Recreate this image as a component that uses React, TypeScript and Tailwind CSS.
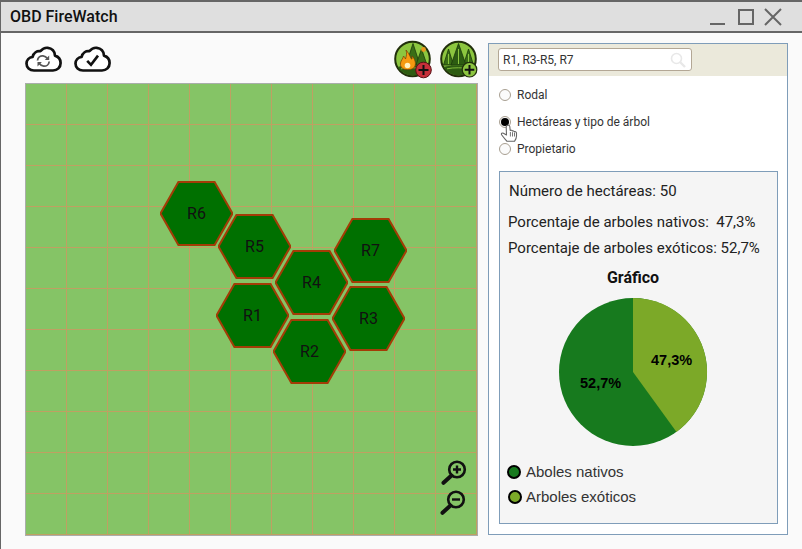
import React from 'react';

const hexes = [
  { label: 'R6', pos: 'left-[134px] top-[97px]' },
  { label: 'R5', pos: 'left-[192px] top-[130px]' },
  { label: 'R7', pos: 'left-[308px] top-[134px]' },
  { label: 'R4', pos: 'left-[249px] top-[166px]' },
  { label: 'R1', pos: 'left-[190px] top-[199px]' },
  { label: 'R3', pos: 'left-[306px] top-[202px]' },
  { label: 'R2', pos: 'left-[247px] top-[235px]' },
];

const cells = Array.from({ length: 121 });

const Hex: React.FC<{ label: string; pos: string }> = ({ label, pos }) => (
  <div className={`absolute ${pos} w-[73px] h-[65px] flex items-center justify-center`}>
    <svg className="absolute inset-0" width="73" height="65" viewBox="0 0 73 65">
      <polygon points="0.5,32.5 18.4,1 54.6,1 72.5,32.5 54.6,64 18.4,64" fill="#007000" stroke="#a33c06" strokeWidth="2" />
    </svg>
    <span className="relative text-[16px] text-[#111] font-['Roboto',sans-serif]">{label}</span>
  </div>
);

const CloudOutline = () => (
  <path
    d="M9 24.5C4.6 24.5 1.5 21.5 1.5 17.6C1.5 14 4 11.3 7.6 10.8C8.6 6.8 12 4.6 15.4 5.2C17.4 2.8 20 1.5 22.8 1.8C27 2.2 29.8 5.4 30 9.6C33.4 10.6 35.6 13.4 35.6 17C35.6 21.4 32.4 24.5 28 24.5Z"
    fill="#fff"
    stroke="#111"
    strokeWidth="2.7"
    strokeLinejoin="round"
  />
);

const CloudSync = () => (
  <svg width="37" height="26" viewBox="0 0 37 26">
    <CloudOutline />
    <g fill="none" stroke="#555" strokeWidth="1.8">
      <path d="M12.5 14.5C12.8 11.4 15.4 9.6 18 9.8C20 10 21.4 11 22.4 12.4" />
      <path d="M24.2 15.5C23.9 18.6 21.3 20.4 18.7 20.2C16.7 20 15.3 19 14.3 17.6" />
    </g>
    <path d="M24.2 9.6V14H19.8Z" fill="#555" />
    <path d="M12.5 20.4V16H16.9Z" fill="#555" />
  </svg>
);

const CloudCheck = () => (
  <svg width="37" height="26" viewBox="0 0 37 26">
    <CloudOutline />
    <path d="M13.2 14.8L17 18.8L24 9.6" fill="none" stroke="#111" strokeWidth="2.6" />
  </svg>
);

const Ground = () => (
  <g>
    <path d="M3.5 27C11 24.5 26 24.5 33.5 27C30 32.5 24 35.5 18.5 35.5C13 35.5 7 32.5 3.5 27Z" fill="#2d5c12" />
    <path d="M7 28.8C13 27.4 24 27.4 30 28.8" fill="none" stroke="#8cc63f" strokeWidth="0.9" />
  </g>
);

const FireBadge = () => (
  <svg width="46" height="42" viewBox="0 0 46 42">
    <circle cx="18.5" cy="19" r="17.3" fill="#8cc63f" stroke="#22300c" strokeWidth="2" />
    <path d="M19 3.5L26 25H12Z" fill="#3a6e16" stroke="#1c3a0c" strokeWidth="0.8" />
    <path d="M27.5 9L33 25H22Z" fill="#3a6e16" stroke="#1c3a0c" strokeWidth="0.8" />
    <Ground />
    <g transform="translate(1 2)">
      <path d="M11 8C16 14 15 16 16.5 17C17.5 17.5 17 15 17 14C20 17 21 21 20 24C19 27 15 28 11 27.5C7 27 5 24.5 5.5 21C6 18 8 17 8.5 14C9.5 15 10 16 10.5 17C11.5 14 12 11 11 8Z" fill="#f59a10" stroke="#7a3b05" strokeWidth="0.7" />
      <circle cx="12.5" cy="23.5" r="2.8" fill="#fff2c0" />
    </g>
    <circle cx="29.5" cy="9.5" r="2.4" fill="#e79a1c" />
    <circle cx="29.5" cy="30" r="7.8" fill="#c6303a" stroke="#5a1015" strokeWidth="1" />
    <path d="M29.5 25V35M24.5 30H34.5" stroke="#111" strokeWidth="2" />
  </svg>
);

const TreeBadge = () => (
  <svg width="46" height="42" viewBox="0 0 46 42">
    <circle cx="18.5" cy="19" r="17.3" fill="#8cc63f" stroke="#22300c" strokeWidth="2" />
    <path d="M8.5 9L13.5 25H3.5Z" fill="#3a6e16" stroke="#1c3a0c" strokeWidth="0.8" />
    <path d="M28.5 9L33.5 25H23.5Z" fill="#3a6e16" stroke="#1c3a0c" strokeWidth="0.8" />
    <path d="M18.5 3.5L26 25H11Z" fill="#2d5c12" stroke="#1c3a0c" strokeWidth="0.8" />
    <path d="M18.5 9V24M8.5 14V24M28.5 14V24" stroke="#8cc63f" strokeWidth="1" />
    <Ground />
    <circle cx="29.5" cy="29.7" r="7.3" fill="#8cc63f" stroke="#22300c" strokeWidth="1.2" />
    <path d="M29.5 25V34.5M24.7 29.7H34.3" stroke="#111" strokeWidth="2" />
  </svg>
);

const ZoomIcon: React.FC<{ plus?: boolean }> = ({ plus }) => (
  <svg width="26" height="26" viewBox="0 0 26 26">
    <circle cx="16" cy="9.5" r="7.8" fill="#85c466" stroke="#111" strokeWidth="2.6" />
    <path d="M10.5 15.5L2.5 22.8" stroke="#111" strokeWidth="4" strokeLinecap="round" />
    <path d={plus ? 'M12 9.5H20M16 5.5V13.5' : 'M12 9.5H20'} stroke="#111" strokeWidth="2.4" />
  </svg>
);

const HandCursor = () => (
  <svg width="18" height="18" viewBox="0 0 18 18">
    <path
      d="M7 1.5C8 0.8 9.5 1 9.8 2.5L10.2 6.5C11 6 12 6.2 12.4 7C13 6.6 14 6.9 14.3 7.7C15 7.4 16.4 7.8 16.5 9V12C16.5 14 15.5 16 14.5 17.3H7C5.5 15.5 3.5 13.5 1.6 10.8C1 9.5 2.2 8.5 3.4 9.2L6.5 11L6.2 3C6.2 2.4 6.5 1.9 7 1.5Z"
      fill="#fff"
      stroke="#666"
      strokeWidth="1.1"
      strokeLinejoin="round"
    />
    <path d="M10.4 8V12.5M12.5 8.2V12.5M14.5 8.6V12.5" stroke="#666" strokeWidth="0.9" />
  </svg>
);

const Radio: React.FC<{ checked?: boolean; label: string }> = ({ checked, label }) => (
  <div className="flex items-center h-[27px]">
    <span className="w-[12px] h-[12px] rounded-full border border-[#a89f91] bg-[#fbfbfb] flex items-center justify-center shrink-0">
      {checked && <span className="w-[8px] h-[8px] rounded-full bg-black" />}
    </span>
    <span className="ml-[6px] text-[12px] text-[#333]">{label}</span>
  </div>
);

const App: React.FC = () => {
  return (
    <div className="w-[802px] h-[549px] overflow-hidden bg-[#fafafa] border-l border-t-2 border-[#666] font-['Roboto',sans-serif] flex flex-col">
      {/* barra de titulo */}
      <div className="h-[31px] shrink-0 bg-[#dfdfdf] border-b-2 border-[#666] flex items-center justify-between pl-[9px]">
        <span className="text-[16px] font-medium text-[#111]">OBD FireWatch</span>
        <svg width="82" height="22" viewBox="0 0 82 22" className="mr-[10px] mt-[2px]">
          <path d="M0 17H15" stroke="#666" strokeWidth="2" />
          <rect x="29" y="3" width="14" height="14" fill="none" stroke="#666" strokeWidth="2" />
          <path d="M55 2L71 18M71 2L55 18" stroke="#666" strokeWidth="2" />
        </svg>
      </div>

      <div className="flex-1 flex pl-[24px] pt-[10px] gap-[10px]">
        {/* mapa */}
        <div className="w-[453px] flex flex-col">
          <div className="h-[40px] flex items-start justify-between">
            <div className="flex gap-[12px] pt-[3px]">
              <CloudSync />
              <CloudCheck />
            </div>
            <div className="flex -mr-[8px] -mt-[3px]">
              <FireBadge />
              <TreeBadge />
            </div>
          </div>
          <div className="relative w-[453px] h-[453px] border border-[#a9aeaa] overflow-hidden bg-[#85c466]">
            <div className="grid grid-cols-[repeat(11,41px)] auto-rows-[41px]">
              {cells.map((_, i) => (
                <div key={i} className="w-[41px] h-[41px] border-r border-b border-[#bfa062]" />
              ))}
            </div>
            {hexes.map(h => (
              <Hex key={h.label} label={h.label} pos={h.pos} />
            ))}
            <div className="absolute left-[415px] top-[376px] flex flex-col gap-[4px]">
              <ZoomIcon plus />
              <div className="-ml-[1px]">
                <ZoomIcon />
              </div>
            </div>
          </div>
        </div>

        {/* panel derecho */}
        <div className="w-[300px] h-[492px] bg-white border border-[#7f9db9] flex flex-col">
          <div className="h-[32px] shrink-0 bg-[#ebe9db] pl-[9px] pt-[4px]">
            <div className="w-[194px] h-[23px] bg-white border border-[#b3a795] rounded-[3px] flex items-center justify-between pl-[4px] pr-[5px]">
              <span className="text-[12px] text-[#333]">R1, R3-R5, R7</span>
              <svg width="16" height="16" viewBox="0 0 16 16" fill="none" stroke="#e8e8e8" strokeWidth="1.6">
                <circle cx="6.5" cy="6.5" r="5" />
                <path d="M10 10L15 15" strokeWidth="2.4" />
              </svg>
            </div>
          </div>
          <div className="relative pl-[10px] pt-[5px] h-[95px] shrink-0">
            <Radio label="Rodal" />
            <Radio checked label="Hectáreas y tipo de árbol" />
            <Radio label="Propietario" />
            <div className="absolute left-[11px] top-[48px]">
              <HandCursor />
            </div>
          </div>

          <div className="ml-[10px] w-[279px] h-[353px] bg-[#f5f5f5] border border-[#7f9db9] flex flex-col">
            <div className="pl-[9px] pt-[10px] text-[15px] text-[#222] leading-[18px]">Número de hectáreas: 50</div>
            <div className="pl-[8px] mt-[13px] text-[15px] text-[#222] leading-[18px] whitespace-pre">Porcentaje de arboles nativos:  47,3%</div>
            <div className="pl-[8px] mt-[8px] text-[15px] text-[#222] leading-[18px]">Porcentaje de arboles exóticos: 52,7%</div>
            <div className="mt-[12px] text-[16px] font-bold text-[#111] leading-[18px] text-center pr-[11px]">Gráfico</div>

            <div className="relative w-[150px] h-[150px] ml-[58px] mt-[10px]">
              <svg width="150" height="150" viewBox="0 0 150 150">
                <circle cx="75" cy="75" r="74" fill="#177a1e" />
                <path d="M75 75V1A74 74 0 0 1 118.5 134.9Z" fill="#7ca928" />
              </svg>
              <span className="absolute left-[93px] top-[54px] text-[14.5px] leading-[18px] font-bold text-black font-['Liberation_Sans',sans-serif]">47,3%</span>
              <span className="absolute left-[22px] top-[77px] text-[14.5px] leading-[18px] font-bold text-black font-['Liberation_Sans',sans-serif]">52,7%</span>
            </div>

            <div className="mt-[16px] flex flex-col gap-[7px] font-['Liberation_Sans',sans-serif] text-[15px] leading-[18px] text-[#333]">
              <div className="flex items-center pl-[7px]">
                <span className="w-[14px] h-[14px] rounded-full bg-[#177a1e] border-2 border-black" />
                <span className="ml-[5px]">Aboles nativos</span>
              </div>
              <div className="flex items-center pl-[8px]">
                <span className="w-[14px] h-[14px] rounded-full bg-[#7ca928] border-2 border-black" />
                <span className="ml-[4px]">Arboles exóticos</span>
              </div>
            </div>
          </div>
        </div>
      </div>
    </div>
  );
};

export default App;
